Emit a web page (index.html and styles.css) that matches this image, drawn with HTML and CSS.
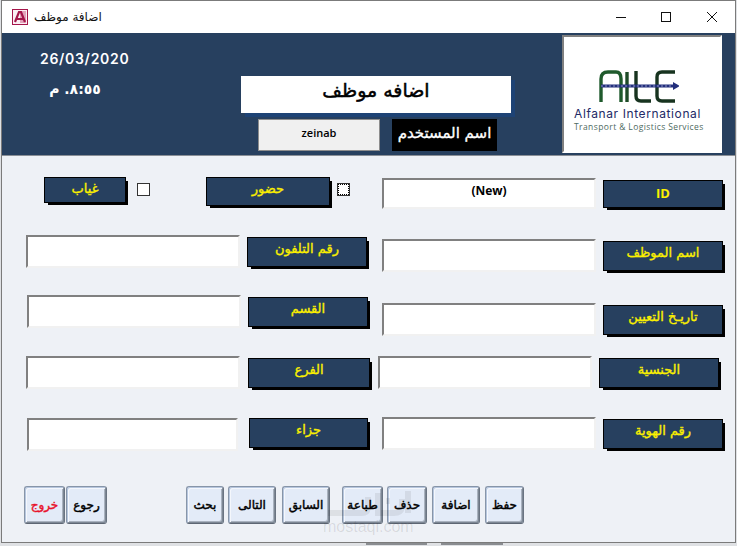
FILE: index.html
```html
<!DOCTYPE html>
<html lang="ar">
<head>
<meta charset="utf-8">
<title>اضافة موظف</title>
<link rel="stylesheet" href="styles.css">
</head>
<body>
<div class="page">
  <div class="win">
    <div class="titlebar">
      <svg class="app-icon" viewBox="0 0 16 16" width="16" height="16" aria-hidden="true">
        <rect x="0.5" y="0.5" width="15" height="15" fill="#fbeef3" stroke="#a4154a"/>
        <rect x="8" y="2" width="6" height="12" fill="#e3a3bb"/>
        <path d="M3 13 L7 3 L9 3 L13 13 M5 10 L11 10" fill="none" stroke="#a4154a" stroke-width="2.2"/>
      </svg>
      <span class="win-title">اضافة موظف</span>
      <div class="win-btns">
        <svg class="wb wb-min" viewBox="0 0 10 10" width="10" height="10" aria-hidden="true"><path d="M0 5.5H10" stroke="#111" fill="none"/></svg>
        <svg class="wb wb-max" viewBox="0 0 10 10" width="10" height="10" aria-hidden="true"><rect x="0.5" y="0.5" width="9" height="9" stroke="#111" fill="none"/></svg>
        <svg class="wb wb-close" viewBox="0 0 10 10" width="10" height="10" aria-hidden="true"><path d="M0 0L10 10M10 0L0 10" stroke="#111" fill="none"/></svg>
      </div>
    </div>

    <header class="header">
      <div class="clock">
        <div class="date">26/03/2020</div>
        <div class="time" dir="rtl">٨:٥٥. م</div>
      </div>
      <div class="head-mid">
        <div class="form-title" dir="rtl">اضافه موظف</div>
        <div class="user-row">
          <div class="user-value">zeinab</div>
          <div class="user-label" dir="rtl">اسم المستخدم</div>
        </div>
      </div>
      <div class="logo">
        <svg class="logo-mark" viewBox="0 0 80 34" width="80" height="34" aria-hidden="true">
          <g fill="none" stroke-width="3.4">
            <path d="M2 32V9Q2 2 9 2H17Q22 2 22 9V32" stroke="#1f5a2c"/>
            <path d="M28 2V32" stroke="#1d4a26"/>
            <path d="M37 1V26Q37 31 42 31H52" stroke="#17331f"/>
            <path d="M76 2H63Q58 2 58 7V26Q58 31 63 31H76" stroke="#17331f"/>
          </g>
          <path d="M2 16H76" stroke="#232f7c" stroke-width="3"/>
          <path d="M2 16H76" stroke="#8e94c4" stroke-width="1" stroke-dasharray="2 2"/>
          <path d="M74 12L81 16L74 20Z" fill="#232f7c"/>
        </svg>
        <div class="logo-name">Alfanar International</div>
        <div class="logo-sub">Transport &amp; Logistics Services</div>
      </div>
    </header>

    <main class="form">
      <div class="fields">
        <section class="col col-left">
          <div class="checks">
            <div class="label lbl-absent" dir="rtl">غياب</div>
            <span class="check check-absent"></span>
            <div class="label lbl-present" dir="rtl">حضور</div>
            <span class="check check-present"></span>
          </div>
          <div class="row row-phone">
            <div class="input"></div>
            <div class="label" dir="rtl">رقم التلفون</div>
          </div>
          <div class="row row-dept">
            <div class="input"></div>
            <div class="label" dir="rtl">القسم</div>
          </div>
          <div class="row row-branch">
            <div class="input"></div>
            <div class="label lbl-wide" dir="rtl">الفرع</div>
          </div>
          <div class="row row-penalty">
            <div class="input input-short"></div>
            <div class="label lbl-penalty" dir="rtl">جزاء</div>
          </div>
        </section>
        <section class="col col-right">
          <div class="row row-id">
            <div class="input input-id">(New)</div>
            <div class="label lbl-id">ID</div>
          </div>
          <div class="row row-name">
            <div class="input"></div>
            <div class="label" dir="rtl">اسم الموظف</div>
          </div>
          <div class="row row-hire">
            <div class="input"></div>
            <div class="label" dir="rtl">تاريـخ التعيين</div>
          </div>
          <div class="row row-nation">
            <div class="input"></div>
            <div class="label" dir="rtl">الجنسية</div>
          </div>
          <div class="row row-idnum">
            <div class="input"></div>
            <div class="label" dir="rtl">رقم الهوية</div>
          </div>
        </section>
      </div>
      <div class="toolbar">
        <button class="btn w41 exit">خروج</button>
        <button class="btn w41 g1">رجوع</button>
        <button class="btn w38 g79">بحث</button>
        <button class="btn w48 g4">التالى</button>
        <button class="btn w48 g6">السابق</button>
        <button class="btn w41 g12">طباعة</button>
        <button class="btn w40 g4">حذف</button>
        <button class="btn w48 g5">اضافة</button>
        <button class="btn w39 g5">حفظ</button>
      </div>
      <svg class="wm-mark" viewBox="0 0 88 30" width="88" height="30" aria-hidden="true">
        <path d="M4 24H38Q44 24 44 17V8M54 4V24H70Q78 24 78 16V10M62 12H66M84 2V24" fill="none" stroke="#000" stroke-opacity=".07" stroke-width="6"/>
      </svg>
      <div class="wm-text">mostaqi.com</div>
    </main>
  </div>
  <span class="behind behind-a"></span>
  <span class="behind behind-b"></span>
</div>
</body>
</html>
```
FILE: styles.css
```css
* { box-sizing: border-box; }
html, body { margin: 0; padding: 0; }
body { font-family: "DejaVu Sans", "Liberation Sans", sans-serif; }
.page { position: relative; width: 737px; height: 546px; overflow: hidden; background: #dfe1e4; }
.win { width: 735px; height: 543px; margin-left: 1px; border: 1px solid #7b7b7b; background: #eef1f6; display: flex; flex-direction: column; }
.behind { position: absolute; top: 543px; height: 2px; background: #8a8d91; }
.behind-a { left: 366px; width: 61px; }
.behind-b { left: 441px; width: 62px; }

.titlebar { height: 32px; background: #fff; display: flex; align-items: center; padding-left: 10px; flex: none; }
.app-icon { margin-top: -1px; }
.win-title { margin-left: 6px; font-size: 12px; color: #111; margin-top: -1px; }
.win-btns { margin-left: auto; display: flex; padding-right: 18px; align-items: center; margin-top: -1px; }
.wb { display: block; }
.wb-max { margin-left: 35px; }
.wb-close { margin-left: 36px; }

.header { height: 123px; flex: none; background: #27405f; border-bottom: 1px solid #8a8f96; display: flex; }
.clock { width: 239px; padding-left: 38px; padding-top: 16px; color: #fff; flex: none; }
.date { font-family: "Inter", sans-serif; font-weight: 600; font-size: 14px; line-height: 20px; letter-spacing: 0.7px; }
.time { width: 60px; margin-left: 5px; margin-top: 11px; font-size: 14px; font-weight: 700; line-height: 18px; text-align: center; }
.head-mid { width: 321px; padding-top: 43px; flex: none; }
.form-title { width: 270px; height: 37px; background: #fff; box-shadow: 4px 4px 0 0 #1e4375; font-size: 19px; font-weight: 400; -webkit-text-stroke: 0.5px #000; color: #000; text-align: center; line-height: 28px; white-space: nowrap; }
.user-row { display: flex; margin-top: 6px; margin-left: 17px; }
.user-value { width: 122px; height: 32px; background: #f0f0f0; border: 1px solid #8d8d8d; text-align: center; font-size: 11px; font-weight: 600; line-height: 26px; color: #000; font-family: "Open Sans", sans-serif; }
.user-label { width: 105px; height: 32px; margin-left: 12px; background: #000; color: #fff; font-size: 15px; font-weight: 400; -webkit-text-stroke: 0.35px #fff; text-align: center; line-height: 28px; white-space: nowrap; overflow: hidden; }
.logo { width: 160px; height: 118px; margin-top: 2px; background: #fff; border: 2px solid #fff; border-top-color: #808080; border-left-color: #808080; padding-left: 10px; display: flex; flex-direction: column; flex: none; }
.logo-mark { margin-top: 33px; margin-left: 25px; display: block; flex: none; }
.logo-name { font-family: "Inter", sans-serif; font-size: 12px; line-height: 12px; margin-top: 4px; color: #232a66; letter-spacing: 0.6px; white-space: nowrap; }
.logo-sub { font-family: "Open Sans", sans-serif; font-size: 8.5px; line-height: 11px; margin-top: 1px; color: #4e6a5f; letter-spacing: 0.4px; white-space: nowrap; }

.form { position: relative; flex: 1; padding-left: 22px; display: flex; flex-direction: column; }
.fields { display: flex; margin-left: 2px; }
.col { display: flex; flex-direction: column; flex: none; }
.col-left { width: 352px; }
.col-right { width: 345px; }
.row { display: flex; align-items: flex-start; gap: 7px; }

.input { width: 214px; height: 33px; background: #fff; border: 2px solid #f1f1f1; border-top-color: #808080; border-left-color: #808080; flex: none; }
.input-short { width: 211px; }
.input-id { height: 31px; text-align: center; font-size: 12px; font-weight: 700; color: #000; line-height: 21px; font-family: "Open Sans", sans-serif; }

.label { width: 120px; height: 30px; margin-top: 2px; background: #27405f; border: 1px solid #000; box-shadow: 3px 3px 0 -1px #000; color: #fbf000; text-align: center; font-size: 13px; font-weight: 400; -webkit-text-stroke: 0.35px #fbf000; line-height: 22px; flex: none; white-space: nowrap; }
.lbl-wide { width: 122px; margin-left: 1px; }
.lbl-penalty { width: 119px; margin-top: 0; margin-left: 4px; }
.lbl-id { height: 28px; line-height: 24px; font-size: 13px; font-weight: 700; -webkit-text-stroke: 0; font-family: "Open Sans", sans-serif; }

.checks { display: flex; align-items: flex-start; margin-top: 21px; margin-left: 18px; }
.checks .label { margin-top: 0; }
.lbl-absent { width: 82px; height: 26px; }
.lbl-present { width: 124px; height: 29px; margin-left: 56px; }
.check { width: 13px; height: 13px; margin-top: 6px; background: #fff; border: 1px solid #333; flex: none; }
.check-absent { margin-left: 11px; }
.check-present { margin-left: 7px; outline: 1px dotted #000; outline-offset: -2px; }

.row-phone { margin-top: 29px; }
.row-dept { margin-top: 27px; margin-left: 1px; }
.row-branch { margin-top: 28px; }
.row-penalty { margin-top: 29px; margin-left: 1px; }
.row-id { margin-top: 22px; margin-left: 4px; }
.row-name { margin-top: 30px; margin-left: 4px; }
.row-hire { margin-top: 31px; margin-left: 4px; }
.row-nation { margin-top: 20px; }
.row-idnum { margin-top: 28px; margin-left: 4px; }

.toolbar { display: flex; margin-top: 35px; }
.btn { height: 38px; padding: 0; font-family: "DejaVu Sans", sans-serif; font-size: 12px; font-weight: 400; -webkit-text-stroke: 0.45px currentColor; color: #000; background: #e3ebf8; border-radius: 3px; border: 1px solid #8795a8; border-bottom-color: #5d6673; border-right-color: #6a7482; box-shadow: inset 1px 1px 0 #b6c6de, inset -1px -1px 0 #7d8794, inset 2px 2px 0 #f4f7fc, inset -2px -2px 0 #a9b2bf; flex: none; white-space: nowrap; overflow: hidden; }
.exit { color: #e8132c; }
.w38 { width: 38px; } .w39 { width: 39px; } .w40 { width: 40px; } .w41 { width: 41px; } .w48 { width: 48px; }
.g1 { margin-left: 1px; } .g4 { margin-left: 4px; } .g5 { margin-left: 5px; } .g6 { margin-left: 6px; } .g12 { margin-left: 12px; } .g79 { margin-left: 79px; }

.wm-mark { position: absolute; left: 322px; top: 333px; pointer-events: none; }
.wm-text { position: absolute; left: 321px; top: 364px; font-family: "Liberation Sans", sans-serif; font-size: 16px; line-height: 14px; color: rgba(0,0,0,.1); pointer-events: none; }
```
